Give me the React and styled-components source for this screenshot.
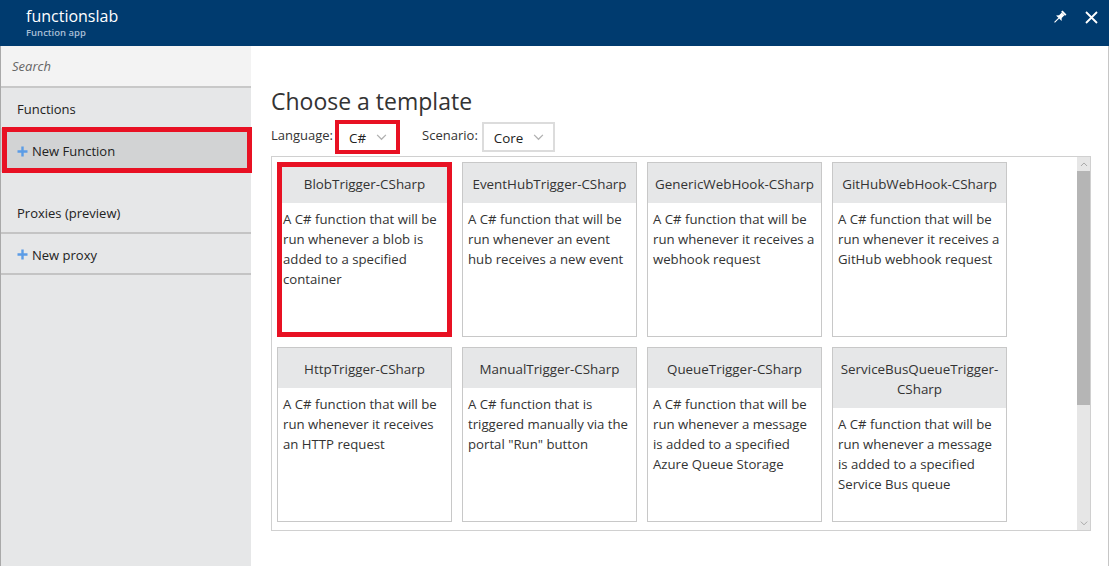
import React from "react";
import styled, { createGlobalStyle } from "styled-components";

const GlobalStyle = createGlobalStyle`
  html, body { margin: 0; padding: 0; background: #fff; }
  body { font-family: "Open Sans", "Noto Sans", sans-serif; color: #333; }
  * { box-sizing: border-box; }
`;

const Frame = styled.div`
  width: 1109px;
  height: 566px;
  display: flex;
  flex-direction: column;
  overflow: hidden;
`;

const TopBar = styled.header`
  height: 46px;
  flex: none;
  background: #003b6f;
  display: flex;
  align-items: flex-start;
  justify-content: space-between;
  padding: 0 10px 0 26px;
`;

const TitleBlock = styled.div`
  display: flex;
  flex-direction: column;
  padding-top: 4px;
`;

const AppName = styled.div`
  color: #fff;
  font-size: 16px;
  line-height: 24px;
`;

const AppKind = styled.div`
  color: #a9bfd6;
  font-size: 9.5px;
  font-weight: 600;
  line-height: 12px;
  margin-top: -1px;
`;

const BarActions = styled.div`
  display: flex;
  align-items: center;
  gap: 16px;
  padding-top: 9px;
`;

const IconButton = styled.span`
  display: inline-flex;
  width: 16px;
  height: 16px;
  align-items: center;
  justify-content: center;
`;

const Body = styled.div`
  flex: 1;
  display: flex;
  border-right: 1px solid #c6c6c6;
  min-height: 0;
`;

const Sidebar = styled.nav`
  width: 251px;
  flex: none;
  background: #e6e7e8;
  border-left: 1px solid #a9a9a9;
  display: flex;
  flex-direction: column;
`;

const Search = styled.div`
  height: 42px;
  background: #f3f3f3;
  border-bottom: 2px solid #c8c8c8;
  padding-left: 11px;
  display: flex;
  align-items: center;
  font-style: italic;
  font-size: 13px;
  color: #666;
`;

const NavHeading = styled.div`
  height: ${(p) => p.$h || 40}px;
  margin-top: ${(p) => p.$mt || 0}px;
  display: flex;
  align-items: center;
  padding-left: 16px;
  padding-top: 2px;
  font-size: 13px;
  color: #222;
  border-bottom: ${(p) => (p.$line ? "2px solid #c4c4c4" : "none")};
`;

const NavItem = styled.div`
  position: relative;
  height: ${(p) => p.$h || 44}px;
  display: flex;
  align-items: center;
  gap: 4px;
  padding-left: 16px;
  padding-top: 2px;
  font-size: 13px;
  color: #222;
  background: ${(p) => (p.$active ? "#d2d3d4" : "transparent")};
  border-bottom: ${(p) => (p.$line ? "2px solid #c4c4c4" : "none")};
  ${(p) =>
    p.$marked &&
    `
    &::after {
      content: "";
      position: absolute;
      left: 1px; right: -1px; top: -1px; bottom: -1px;
      border: 5px solid #e81123;
      pointer-events: none;
    }
  `}
`;

const Main = styled.main`
  flex: 1;
  min-width: 0;
  background: #fff;
  padding: 40px 17px 0 20px;
  display: flex;
  flex-direction: column;
`;

const PageTitle = styled.h1`
  margin: 0;
  font-size: 23px;
  font-weight: 400;
  line-height: 30px;
  color: #333;
`;

const Options = styled.div`
  display: flex;
  align-items: center;
  margin-top: 6px;
  height: 30px;
`;

const OptionLabel = styled.span`
  font-size: 13px;
  color: #333;
  margin-right: 4px;
  margin-left: ${(p) => p.$ml || 0}px;
  position: relative;
  top: -2px;
`;

const Select = styled.div`
  height: 30px;
  display: flex;
  align-items: center;
  gap: 10px;
  padding: 1px 9px 0 10px;
  border: 2px solid #dcdcdc;
  font-size: 13.4px;
  color: #222;
  ${(p) => p.$marked && `outline: 4px solid #e81123; outline-offset: -2px;`}
`;

const Gallery = styled.div`
  margin-top: 4px;
  height: 375px;
  border: 1px solid #d0d0d0;
  display: flex;
`;

const Grid = styled.div`
  flex: 1;
  overflow: hidden;
  padding: 5px;
  display: grid;
  grid-template-columns: repeat(4, 175px);
  grid-auto-rows: 175px;
  gap: 10px;
  align-content: start;
`;

const Card = styled.div`
  position: relative;
  border: 1px solid #c8c8c8;
  background: #fff;
  display: flex;
  flex-direction: column;
  ${(p) =>
    p.$marked &&
    `
    &::after {
      content: "";
      position: absolute;
      inset: -1px;
      border: 5px solid #e81123;
      pointer-events: none;
    }
  `}
`;

const CardHead = styled.div`
  background: #e6e7e8;
  padding: 11px 6px 9px;
  text-align: center;
  font-size: 13.4px;
  line-height: 20px;
  color: #333;
`;

const CardText = styled.div`
  padding: 6px 2px 5px 5px;
  font-size: 13.2px;
  line-height: 20px;
  color: #333;
`;

const Scrollbar = styled.div`
  width: 13px;
  flex: none;
  background: #e6e6e6;
  display: flex;
  flex-direction: column;
`;

const ScrollButton = styled.div`
  height: 14px;
  flex: none;
  display: flex;
  align-items: center;
  justify-content: center;
`;

const Thumb = styled.div`
  height: 234px;
  flex: none;
  background: #b5b5b5;
`;

const TrackRest = styled.div`
  flex: 1;
`;

const Plus = () => (
  <svg width="11" height="11" viewBox="0 0 11 11">
    <path d="M5.5 0.5v10M0.5 5.5h10" stroke="#5b9ce6" strokeWidth="2.4" />
  </svg>
);

const Chevron = ({ up, color = "#b0b0b0", w = 11 }) => (
  <svg width={w} height={w * 0.6} viewBox="0 0 10 6">
    <path
      d={up ? "M1 5.2L5 1.2L9 5.2" : "M1 0.8L5 4.8L9 0.8"}
      fill="none"
      stroke={color}
      strokeWidth="1.1"
    />
  </svg>
);

const PinIcon = () => (
  <svg width="15" height="15" viewBox="0 0 16 16">
    <g transform="rotate(45 8 8)" fill="#fff">
      <rect x="5" y="0.5" width="6" height="2" />
      <path d="M6 2.5h4v4.2l2.2 2.3H3.8L6 6.7z" />
      <rect x="7.4" y="9" width="1.2" height="6.5" />
    </g>
  </svg>
);

const CloseIcon = () => (
  <svg width="13" height="13" viewBox="0 0 13 13">
    <path d="M1 1L12 12M12 1L1 12" stroke="#fff" strokeWidth="1.8" />
  </svg>
);

const templates = [
  {
    name: "BlobTrigger-CSharp",
    text: "A C# function that will be run whenever a blob is added to a specified container",
    marked: true,
  },
  {
    name: "EventHubTrigger-CSharp",
    text: "A C# function that will be run whenever an event hub receives a new event",
  },
  {
    name: "GenericWebHook-CSharp",
    text: "A C# function that will be run whenever it receives a webhook request",
  },
  {
    name: "GitHubWebHook-CSharp",
    text: "A C# function that will be run whenever it receives a GitHub webhook request",
  },
  {
    name: "HttpTrigger-CSharp",
    text: "A C# function that will be run whenever it receives an HTTP request",
  },
  {
    name: "ManualTrigger-CSharp",
    text: 'A C# function that is triggered manually via the portal "Run" button',
  },
  {
    name: "QueueTrigger-CSharp",
    text: "A C# function that will be run whenever a message is added to a specified Azure Queue Storage",
  },
  {
    name: "ServiceBusQueueTrigger-CSharp",
    text: "A C# function that will be run whenever a message is added to a specified Service Bus queue",
  },
];

export default function App() {
  return (
    <>
      <GlobalStyle />
      <Frame>
        <TopBar>
          <TitleBlock>
            <AppName>functionslab</AppName>
            <AppKind>Function app</AppKind>
          </TitleBlock>
          <BarActions>
            <IconButton>
              <PinIcon />
            </IconButton>
            <IconButton>
              <CloseIcon />
            </IconButton>
          </BarActions>
        </TopBar>
        <Body>
          <Sidebar>
            <Search>Search</Search>
            <NavHeading>Functions</NavHeading>
            <NavItem $active $marked>
              <Plus />
              New Function
            </NavItem>
            <NavHeading $mt={20} $h={42} $line>
              Proxies (preview)
            </NavHeading>
            <NavItem $h={41} $line>
              <Plus />
              New proxy
            </NavItem>
          </Sidebar>
          <Main>
            <PageTitle>Choose a template</PageTitle>
            <Options>
              <OptionLabel>Language:</OptionLabel>
              <Select $marked>
                C#
                <Chevron />
              </Select>
              <OptionLabel $ml={24}>Scenario:</OptionLabel>
              <Select>
                Core
                <Chevron />
              </Select>
            </Options>
            <Gallery>
              <Grid>
                {templates.map((t) => (
                  <Card key={t.name} $marked={t.marked}>
                    <CardHead>{t.name}</CardHead>
                    <CardText>{t.text}</CardText>
                  </Card>
                ))}
              </Grid>
              <Scrollbar>
                <ScrollButton>
                  <Chevron up color="#a0a0a0" w={8} />
                </ScrollButton>
                <Thumb />
                <TrackRest />
                <ScrollButton>
                  <Chevron color="#a0a0a0" w={8} />
                </ScrollButton>
              </Scrollbar>
            </Gallery>
          </Main>
        </Body>
      </Frame>
    </>
  );
}
